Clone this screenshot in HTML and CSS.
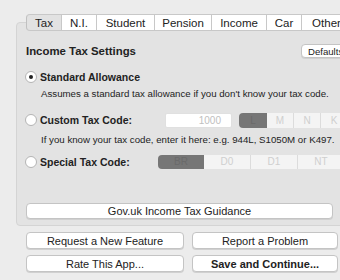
FILE: index.html
```html
<!DOCTYPE html>
<html lang="en">

<head>
	<meta charset="UTF-8">
	<title>Tax Settings</title>
	<link rel="stylesheet" href="styles.css">
</head>

<body>
	<div id="window">
		<div id="tabs">
			<div class="tab active">Tax</div>
			<div class="tab w-ni">N.I.</div>
			<div class="tab w-student">Student</div>
			<div class="tab w-pension">Pension</div>
			<div class="tab w-income">Income</div>
			<div class="tab w-car">Car</div>
			<div class="tab w-other">Other</div>
		</div>
		<div id="panel">
			<div class="row heading">
				<div class="title">Income Tax Settings</div>
				<button class="btn small">Defaults</button>
			</div>
			<div class="row option first">
				<span class="radio on"></span>
				<span class="label">Standard Allowance</span>
			</div>
			<div class="hint">Assumes a standard tax allowance if you don't know your tax code.</div>
			<div class="row option custom">
				<span class="radio"></span>
				<span class="label to-field">Custom Tax Code:</span>
				<div class="field">1000</div>
				<div class="seg letters">
					<span class="on">L</span>
					<span>M</span>
					<span>N</span>
					<span>K</span>
				</div>
			</div>
			<div class="hint">If you know your tax code, enter it here: e.g. 944L, S1050M or K497.</div>
			<div class="row option special">
				<span class="radio"></span>
				<span class="label to-seg">Special Tax Code:</span>
				<div class="seg codes">
					<span class="on">BR</span>
					<span>D0</span>
					<span>D1</span>
					<span>NT</span>
				</div>
			</div>
			<button class="btn guide">Gov.uk Income Tax Guidance</button>
		</div>
		<div id="actions">
			<button class="btn">Request a New Feature</button>
			<button class="btn">Report a Problem</button>
			<button class="btn">Rate This App...</button>
			<button class="btn bold">Save and Continue...</button>
		</div>
	</div>
</body>

</html>
```

FILE: styles.css
```css
html,
body {
	margin: 0;
	height: 100vh;
	width: 100vw;
	overflow: hidden;
	background: #ececec;
	font-family: 'Liberation Sans', Arial, sans-serif;
	color: #222;
}

#window {
	width: 380px;
	padding-top: 14px;
}

#tabs {
	display: flex;
	margin-left: 26px;
	height: 17px;
	position: relative;
	z-index: 1;
	margin-bottom: -9px;
}

.tab {
	box-sizing: border-box;
	height: 17px;
	line-height: 16px;
	font-size: 11.5px;
	text-align: center;
	background: #fff;
	border: 1px solid #c8c8c8;
	border-left: 0;
	width: 36px;
}

.tab.active {
	background: #e2e2e2;
	border-left: 1px solid #c0c0c0;
	border-radius: 4px 0 0 4px;
}

.w-ni { width: 35px; }
.w-student { width: 58px; }
.w-pension { width: 57px; }
.w-income { width: 55px; }
.w-car { width: 35px; }
.w-other { width: 50px; }

#panel {
	margin-left: 16px;
	height: 204px;
	box-sizing: border-box;
	background: #e3e3e3;
	border: 1px solid #d4d4d4;
	border-radius: 4px;
	padding: 21px 0 0 9px;
}

.row {
	display: flex;
	align-items: center;
}

.heading {
	height: 14px;
}

.title {
	flex: 0 0 275px;
	font-weight: bold;
	font-size: 11.4px;
}

.btn {
	box-sizing: border-box;
	background: #fff;
	border: 1px solid #c4c4c4;
	border-radius: 4px;
	font-family: inherit;
	font-size: 11px;
	color: #222;
	height: 17px;
	padding: 0;
	box-shadow: 0 1px 0 #d0d0d0;
}

.btn.small {
	width: 50px;
	height: 14px;
	font-size: 9.6px;
	text-align: left;
	padding-left: 6px;
}

.option {
	height: 14px;
}

.first {
	margin-top: 12px;
}

.radio {
	box-sizing: border-box;
	flex: none;
	width: 12px;
	height: 12px;
	margin-left: -1px;
	border-radius: 50%;
	background: #fff;
	border: 1px solid #b4b4b4;
	display: grid;
	place-items: center;
}

.radio.on::after {
	content: '';
	width: 4px;
	height: 4px;
	border-radius: 50%;
	background: #222;
}

.label {
	font-weight: bold;
	font-size: 10.5px;
	margin-left: 3px;
}

.label.to-field {
	flex: 0 0 125px;
}

.label.to-seg {
	flex: 0 0 118px;
}

.hint {
	font-size: 9.7px;
	margin: 3px 0 0 15px;
	height: 13px;
	line-height: 13px;
}

.custom {
	margin-top: 12px;
	height: 16px;
}

.custom + .hint {
	margin-top: 5px;
}

.field {
	box-sizing: border-box;
	width: 67px;
	height: 15px;
	background: #fff;
	border: 1px solid #e0e0e0;
	border-radius: 2px;
	font-size: 10px;
	color: #c0c0c0;
	text-align: right;
	padding-right: 10px;
	line-height: 13px;
}

.seg {
	display: flex;
	height: 15px;
	margin-left: 7px;
}

.seg span {
	box-sizing: border-box;
	width: 27px;
	height: 100%;
	background: #f4f4f4;
	border-right: 1px solid #dcdcdc;
	color: #cfcfcf;
	font-size: 10px;
	line-height: 15px;
	text-align: center;
}

.seg span.on {
	background: #767676;
	color: #6a6a6a;
	border-radius: 4px 0 0 4px;
	border-right: 0;
	width: 28px;
}

.special {
	margin-top: 9px;
}

.codes {
	margin-left: 0;
	height: 14px;
}

.codes span {
	width: 47px;
	line-height: 14px;
}

.codes span.on {
	width: 46px;
}

.btn.guide {
	display: block;
	margin-top: 34px;
	width: 307px;
	height: 16px;
}

#actions {
	display: grid;
	grid-template-columns: 158px 146px;
	column-gap: 8px;
	row-gap: 6px;
	padding: 6px 0 0 26px;
}

.btn.bold {
	font-weight: bold;
}
```
